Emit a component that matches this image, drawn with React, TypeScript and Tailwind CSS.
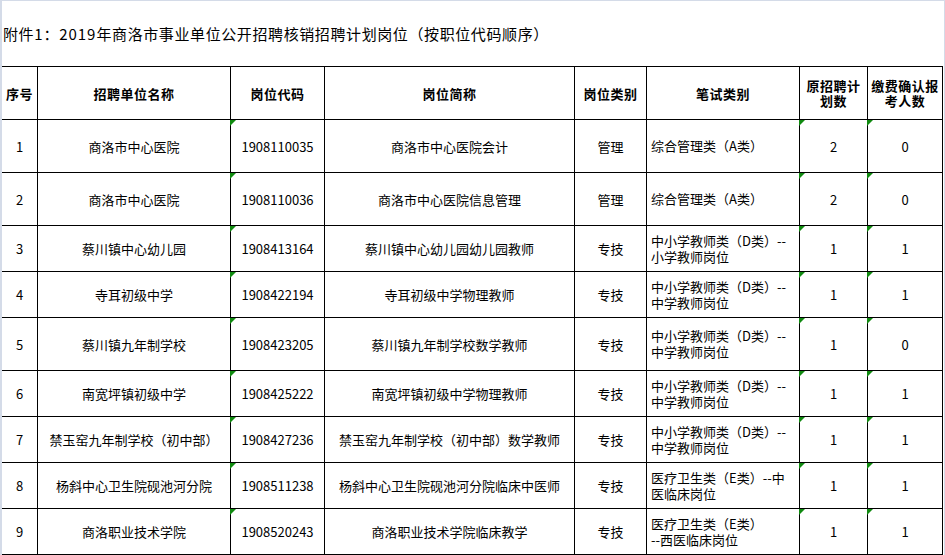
import React from "react";

interface Row {
  no: string;
  unit: string;
  code: string;
  post: string;
  kind: string;
  exam: string[];
  plan: string;
  confirmed: string;
  tall: boolean;
}

const ROWS: Row[] = [
  { no: "1", unit: "商洛市中心医院", code: "1908110035", post: "商洛市中心医院会计", kind: "管理", exam: ["综合管理类（A类）"], plan: "2", confirmed: "0", tall: true },
  { no: "2", unit: "商洛市中心医院", code: "1908110036", post: "商洛市中心医院信息管理", kind: "管理", exam: ["综合管理类（A类）"], plan: "2", confirmed: "0", tall: true },
  { no: "3", unit: "蔡川镇中心幼儿园", code: "1908413164", post: "蔡川镇中心幼儿园幼儿园教师", kind: "专技", exam: ["中小学教师类（D类）--", "小学教师岗位"], plan: "1", confirmed: "1", tall: false },
  { no: "4", unit: "寺耳初级中学", code: "1908422194", post: "寺耳初级中学物理教师", kind: "专技", exam: ["中小学教师类（D类）--", "中学教师岗位"], plan: "1", confirmed: "1", tall: false },
  { no: "5", unit: "蔡川镇九年制学校", code: "1908423205", post: "蔡川镇九年制学校数学教师", kind: "专技", exam: ["中小学教师类（D类）--", "中学教师岗位"], plan: "1", confirmed: "0", tall: true },
  { no: "6", unit: "南宽坪镇初级中学", code: "1908425222", post: "南宽坪镇初级中学物理教师", kind: "专技", exam: ["中小学教师类（D类）--", "中学教师岗位"], plan: "1", confirmed: "1", tall: false },
  { no: "7", unit: "禁玉窑九年制学校（初中部）", code: "1908427236", post: "禁玉窑九年制学校（初中部）数学教师", kind: "专技", exam: ["中小学教师类（D类）--", "中学教师岗位"], plan: "1", confirmed: "1", tall: false },
  { no: "8", unit: "杨斜中心卫生院砚池河分院", code: "1908511238", post: "杨斜中心卫生院砚池河分院临床中医师", kind: "专技", exam: ["医疗卫生类（E类）--中", "医临床岗位"], plan: "1", confirmed: "1", tall: false },
  { no: "9", unit: "商洛职业技术学院", code: "1908520243", post: "商洛职业技术学院临床教学", kind: "专技", exam: ["医疗卫生类（E类）", "--西医临床岗位"], plan: "1", confirmed: "1", tall: false },
];

const GRID = "grid grid-cols-[36px_193px_94px_250px_72px_153px_68px_75px]";

function Flag() {
  return (
    <svg className="absolute -left-px top-0" width="6" height="6" viewBox="0 0 6 6">
      <polygon points="0,0 6,0 0,6" fill="#108a10" />
    </svg>
  );
}

function Cell({ children, flag, left, className }: { children: React.ReactNode; flag?: boolean; left?: boolean; className?: string }) {
  return (
    <div
      className={
        "relative flex items-center border-r border-b border-black " +
        (left ? "justify-start pl-[4px] " : "justify-center text-center ") +
        (className ?? "")
      }
    >
      {flag && <Flag />}
      {children}
    </div>
  );
}

export default function App() {
  return (
    <div
      className="w-[945px] h-[555px] overflow-hidden bg-white border-l-2 border-t border-r border-[#d4dbe8] text-black"
      style={{ fontFamily: '"Noto Sans CJK SC", sans-serif' }}
    >
      <div className="h-[65px] flex items-center pl-px text-[15px] leading-none tracking-[0.6px]">
        附件<span className="tracking-[1px]">1</span>：<span className="tracking-[1px]">2019</span>年商洛市事业单位公开招聘核销招聘计划岗位（按职位代码顺序）
      </div>

      <div className="w-[941px] border-t border-black text-[13px]">
        <div className={GRID + " h-[53px] font-bold tracking-[0.5px] leading-[15px]"}>
          <Cell>序号</Cell>
          <Cell>招聘单位名称</Cell>
          <Cell>岗位代码</Cell>
          <Cell>岗位简称</Cell>
          <Cell>岗位类别</Cell>
          <Cell>笔试类别</Cell>
          <Cell>
            原招聘计
            <br />
            划数
          </Cell>
          <Cell>
            缴费确认报
            <br />
            考人数
          </Cell>
        </div>

        {ROWS.map((r) => (
          <div key={r.no} className={GRID + " leading-[15px] " + (r.tall ? "h-[53px]" : "h-[46px]")}>
            <Cell>{r.no}</Cell>
            <Cell>{r.unit}</Cell>
            <Cell flag>{r.code}</Cell>
            <Cell>{r.post}</Cell>
            <Cell>{r.kind}</Cell>
            <Cell left>
              <div className="leading-[16px]">
                {r.exam.map((l) => (
                  <div key={l}>{l}</div>
                ))}
              </div>
            </Cell>
            <Cell flag>{r.plan}</Cell>
            <Cell flag>{r.confirmed}</Cell>
          </div>
        ))}
      </div>
    </div>
  );
}
